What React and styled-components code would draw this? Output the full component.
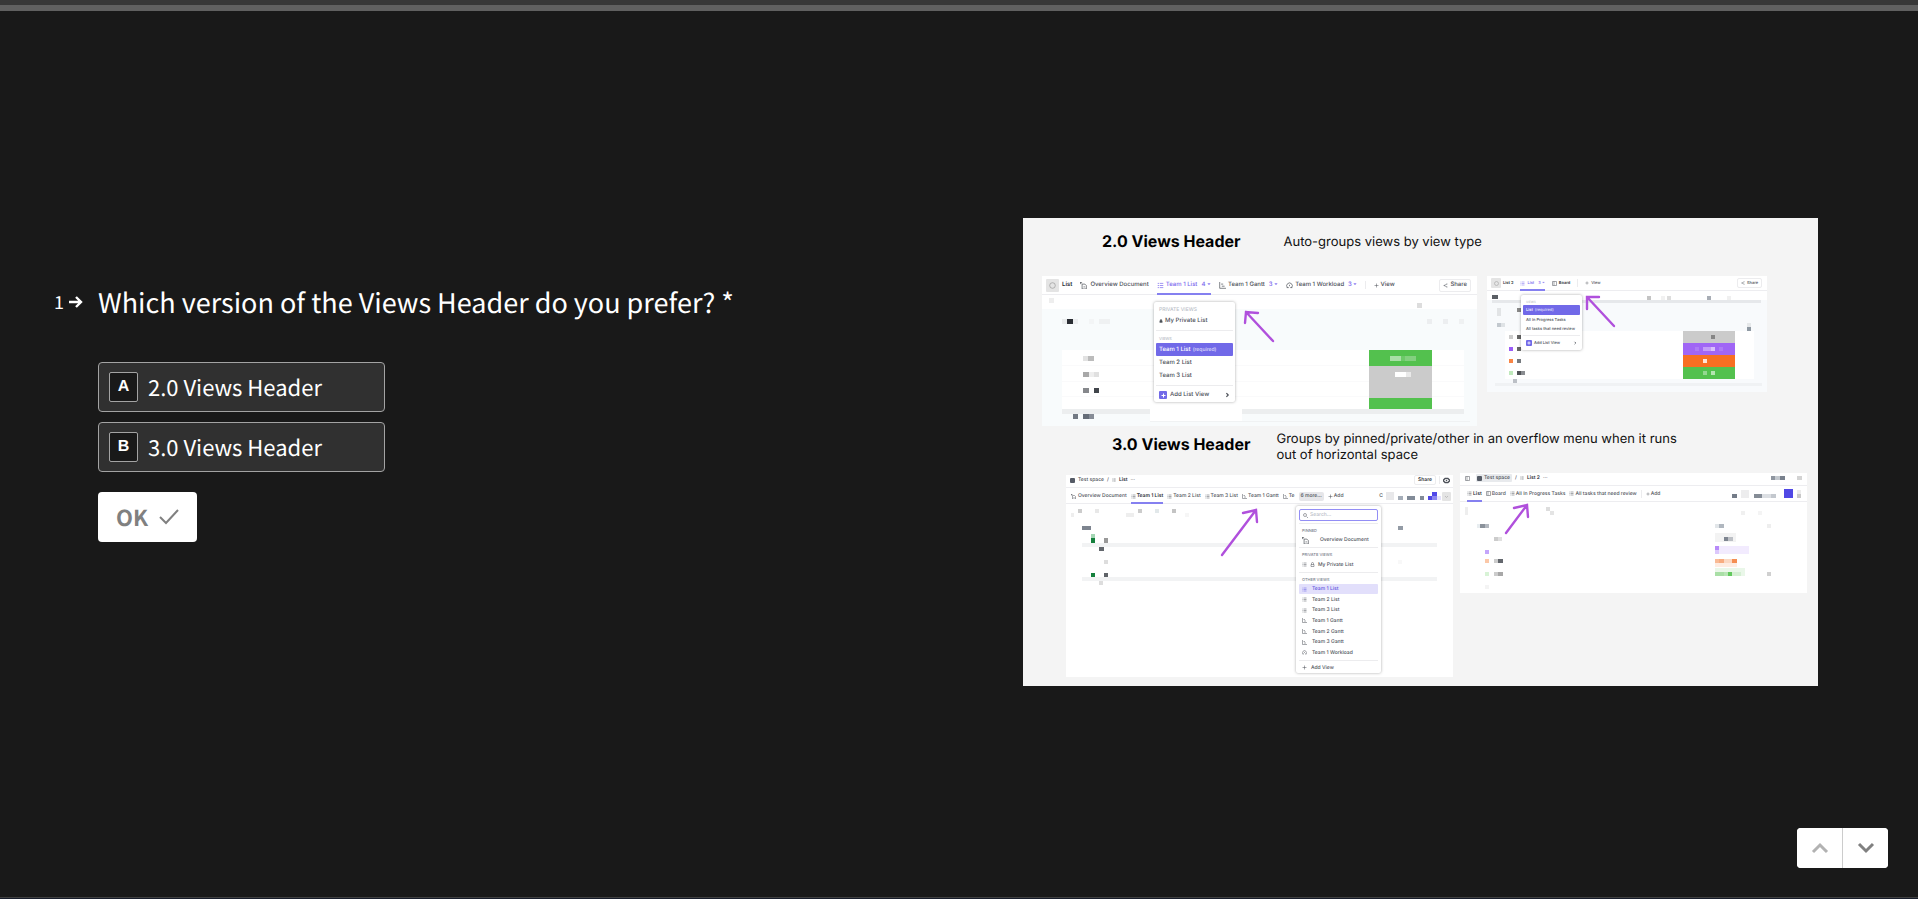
import React, { useState } from 'react';
import styled, { createGlobalStyle, css } from 'styled-components';

const GlobalStyle = createGlobalStyle`
  * {
    box-sizing: border-box;
  }

  body {
    margin: 0;
    background: #191919;
    color: #fff;
    font-family: "Noto Sans CJK SC", "Noto Sans", sans-serif;
    text-rendering: geometricPrecision;
  }

  button, input {
    font: inherit;
    color: inherit;
    text-rendering: inherit;
  }
`;

const Page = styled.div`
  min-height: 100vh;
  display: flex;
  flex-direction: column;
  border-bottom: 1px solid #171d2b;
`;

const TopEdge = styled.div`
  height: 5px;
  background: #373737;
`;

const Progress = styled.div`
  height: 6px;
  background: #606060;
`;

const Main = styled.main`
  flex: 1;
  display: grid;
  grid-template-columns: 1fr 1fr;
  align-items: center;
  padding-bottom: 4px;
  border-bottom: 1px solid #404040;
`;

const Question = styled.form`
  display: grid;
  grid-template-columns: 98px 1fr;
  padding-bottom: 81px;
`;

const Counter = styled.div`
  display: flex;
  align-items: center;
  justify-content: flex-end;
  gap: 5px;
  height: 41px;
  padding-right: 15px;
  font-size: 18px;
`;

const Title = styled.h1`
  margin: 0 0 39px;
  font-size: 27px;
  line-height: 42px;
  font-weight: 400;
`;

const Answers = styled.div`
  grid-column: 2;
  display: flex;
  flex-direction: column;
  align-items: flex-start;
  gap: 10px;
`;

const Option = styled.label`
  display: flex;
  align-items: center;
  gap: 10px;
  min-width: 287px;
  height: 50px;
  padding: 0 10px;
  border: 1px solid #a3a3a3;
  border-radius: 4px;
  background: ${props => (props.$checked ? '#474747' : '#303030')};
  font-size: 22px;
  cursor: pointer;
`;

const Radio = styled.input`
  position: absolute;
  width: 1px;
  height: 1px;
  margin: 0;
  opacity: 0;
`;

const Key = styled.span`
  display: flex;
  align-items: center;
  justify-content: center;
  width: 29px;
  height: 30px;
  border: 1px solid #a3a3a3;
  border-radius: 2px;
  background: #191919;
  font: 700 16px "Liberation Sans", Arial, sans-serif;
`;

const OkButton = styled.button`
  display: flex;
  align-items: center;
  gap: 11px;
  height: 50px;
  margin-top: 10px;
  padding: 0 18px;
  border: 0;
  border-radius: 4px;
  background: #fff;
  color: #808080;
  font-size: 22px;
  font-weight: 700;
  cursor: pointer;
`;

const Nav = styled.nav`
  position: fixed;
  right: 30px;
  bottom: 31px;
  display: flex;
  border-radius: 4px;
  overflow: hidden;
  background: #fff;
`;

const NavButton = styled.button`
  display: flex;
  align-items: center;
  justify-content: center;
  width: 45px;
  height: 40px;
  padding: 0;
  border: 0;
  background: #fff;
  color: ${props => (props.disabled ? '#b2b2b2' : '#808080')};

  & + & {
    width: 46px;
    border-left: 1px solid #ccc;
  }
`;

/* collage */

const Attachment = styled.div`
  padding: 0 100px 0 64px;
`;

const Board = styled.figure`
  margin: 0;
  padding-bottom: 9px;
  background: #f4f4f4;
  color: #111;
  font-family: Inter, sans-serif;
`;

const Caption = styled.div`
  display: flex;
  gap: ${props => props.$gap}px;
  height: ${props => props.$height}px;
  padding: ${props => props.$padding};

  h2 {
    margin: 0;
    color: #000;
    font-size: 16px;
    line-height: 26px;
    font-weight: 700;
  }

  p {
    margin: 0;
    max-width: 410px;
    font-size: 13px;
    line-height: ${props => props.$line}px;
  }
`;

const Shots = styled.div`
  display: grid;
  align-items: start;
  grid-template-columns: ${props => props.$columns};
  gap: ${props => props.$gap}px;
  padding: ${props => props.$padding};
`;

const Shot = styled.section`
  position: relative;
  min-height: ${props => props.$height}px;
  margin-top: ${props => props.$top || 0}px;
  background: #fff;
  color: #4d5159;
  font-size: ${props => props.$size}px;
  line-height: 8px;
  font-weight: 500;
  white-space: nowrap;

  svg {
    flex: none;
  }
`;

const Canvas = styled.svg`
  position: absolute;
  top: 0;
  left: 0;
  width: 100%;
`;

const Bar = styled.div`
  position: relative;
  display: flex;
  align-items: center;
  gap: ${props => props.$gap}px;
  height: ${props => props.$height}px;
  padding: ${props => props.$padding};
  border-bottom: 1px solid #ededf0;
`;

const plain = css`
  display: flex;
  align-items: center;
  padding: 0;
  border: 0;
  background: none;
  line-height: inherit;
  font-weight: inherit;
`;

const Tab = styled.button`
  ${plain}
  align-self: stretch;
  gap: ${props => props.$gap || 2}px;
  color: ${props => props.$color || '#4d5159'};
  box-shadow: ${props => (props.$active ? '0 1px 0 #8580f0, inset 0 -1px 0 #8580f0' : 'none')};

  small {
    margin-left: 2px;
    font-size: inherit;
    color: #7b68ee;
  }
`;

const Badge = styled.span`
  display: flex;
  align-items: center;
  justify-content: center;
  width: ${props => props.$size}px;
  height: ${props => props.$size}px;
  border-radius: 1px;
  background: ${props => props.$bg || '#e4e4e4'};
  color: #999;
`;

const Strong = styled.strong`
  color: #2a2e34;
  font-weight: 600;
`;

const Rule = styled.i`
  width: 1px;
  height: 8px;
  background: #ececee;
`;

const Clipped = styled.span`
  margin-left: auto;
  padding-right: 55px;
`;

const ShareButton = styled.button`
  ${plain}
  gap: 2px;
  margin-left: auto;
  height: ${props => props.$height}px;
  padding: 0 3px;
  border: 1px solid #ececee;
  border-radius: 2px;
`;

const More = styled.button`
  ${plain}
  height: 9px;
  padding: 0 2px;
  border-radius: 2px;
  background: #e6e6e9;
`;

const Pill = styled.span`
  display: flex;
  align-items: center;
  gap: 2px;
  height: 8px;
  margin-left: 3px;
  padding: 0 2px 0 1px;
  border-radius: 1px;
  background: #e8eaed;
`;

const Menu = styled.div`
  position: absolute;
  top: ${props => props.$top}px;
  left: ${props => props.$left}px;
  width: ${props => props.$width}px;
  padding: ${props => props.$padding};
  border-radius: 2px;
  background: #fff;
  box-shadow: 0 0 3px rgba(0, 0, 0, .35);

  hr {
    margin: ${props => props.$rule} 0;
    border: 0;
    border-top: 1px solid #ececee;
  }
`;

const Label = styled.div`
  height: ${props => props.$height}px;
  padding-left: 3px;
  color: ${props => props.$color || '#b9bec7'};
  font-size: ${props => props.$size}px;
  line-height: ${props => props.$height}px;
`;

const Item = styled.button`
  ${plain}
  gap: ${props => props.$gap || 2}px;
  width: 100%;
  height: ${props => props.$height}px;
  padding: 0 3px;
  border-radius: 1px;
  background: ${props => props.$bg || 'transparent'};
  color: ${props => props.$color || '#4d5159'};

  small {
    font-size: ${props => props.$note || 5}px;
    opacity: .75;
  }

  > svg:nth-child(3) {
    margin-left: auto;
  }
`;

const Stack = styled.div`
  display: grid;
  height: 74px;
  grid-auto-rows: 1fr;
  align-items: center;
`;

const Search = styled.label`
  display: flex;
  align-items: center;
  gap: 2px;
  height: 12px;
  padding: 0 3px;
  border: 1px solid #938ef5;
  border-radius: 2px;

  input {
    width: 100%;
    min-width: 0;
    padding: 0;
    border: 0;
    background: none;
    outline: none;
  }

  input::placeholder {
    color: #b9bec7;
  }
`;

const ICONS = {
  list: <path d="M1 2h2M1 5h2M1 8h2M4 2h5M4 5h5M4 8h5" />,
  gantt: <path d="M1 0v9h9M3 3h3M4 6h4" />,
  board: <path d="M1 1h8v8H1zM4 1v8" />,
  gauge: <path d="M2 8a4 4 0 1 1 6 0M1 8h3M6 8h3M5 6V4" />,
  doc: <path d="M3 3h4l2 2v5H3zM5 7h2M0 1h3M1 0v3" />,
  plus: <path d="M5 1v8M1 5h8" />,
  lock: <path d="M2 5h6v4H2zM3 5V3a2 2 0 0 1 4 0v2" fill="currentColor" />,
  unlock: <path d="M2 5h6v4H2zM3 5V3a2 2 0 0 1 4 0v2" />,
  share: <path d="M8 2L2 5l6 3M8 1v2M8 7v2M2 4v2" />,
  search: <path d="M7 7l3 3M1 4a3 3 0 1 0 6 0a3 3 0 1 0-6 0" />,
  gear: <path d="M0 5l3-3h4l3 3-3 3H3zM4 5h2" />,
  right: <path d="M4 2l3 3-3 3" />,
  down: <path d="M2 4l3 3 3-3" />,
  caret: <path d="M2 4h6L5 7z" fill="currentColor" />,
  circle: <circle cx="5" cy="5" r="4" />,
};

function Icon({ name, size = 5, color = 'currentColor', weight = 1 }) {
  return (
    <svg width={size} height={size} viewBox="0 0 10 10" fill="none" stroke={color} strokeWidth={weight} aria-hidden="true">
      {ICONS[name]}
    </svg>
  );
}

// every block is [x, y, width, height, fill]
function Mosaic({ width, height, blocks }) {
  return (
    <Canvas viewBox={`0 0 ${width} ${height}`} aria-hidden="true">
      {blocks.map(([x, y, w, h, fill], i) => (
        <rect key={i} x={x} y={y} width={w} height={h} fill={fill} />
      ))}
    </Canvas>
  );
}

function Arrow({ width, height, d }) {
  return (
    <Canvas viewBox={`0 0 ${width} ${height}`} fill="none" stroke="#b050dc" strokeWidth="2.4" strokeLinecap="round" aria-hidden="true">
      <path d={d} />
    </Canvas>
  );
}

const GROUPED = [
  [0, 33, 435, 117, '#f8fbfc'], [7, 22, 5, 5, '#eee'], [375, 27, 5, 5, '#ddd'],
  [20, 43, 5, 5, '#e9ebec'], [25, 43, 6, 5, '#2a2d33'], [31, 43, 5, 5, '#eceef0'], [47, 43, 5, 5, '#f3f5f6'], [57, 43, 11, 5, '#eff1f2'],
  [385, 43, 5, 5, '#eceef0'], [401, 43, 5, 5, '#eceef0'], [417, 43, 5, 5, '#eff1f2'],
  [20, 74, 402, 59, '#fff'], [20, 89, 402, 1, '#fafafb'], [20, 105, 402, 1, '#fafafb'], [20, 120, 402, 1, '#fafafb'],
  [20, 133, 402, 5, '#eceeef'], [108, 127, 92, 18, '#fff'], [108, 145, 320, 1, '#f0f2f3'],
  [327, 74, 63, 16, '#53c14e'], [327, 90, 63, 32, '#cbcbcb'], [327, 122, 63, 11, '#53c14e'],
  [348, 80, 11, 5, '#a9dfa6'], [359, 80, 4, 5, '#6cca68'], [363, 80, 11, 5, '#83d07f'],
  [353, 96, 11, 5, '#fff'], [364, 96, 5, 5, '#e9e9e9'],
  [41, 80, 5, 5, '#e2e2e2'], [46, 80, 6, 5, '#bcbcbc'],
  [41, 96, 6, 5, '#a8a8a8'], [47, 96, 5, 5, '#eee'], [52, 96, 5, 5, '#e0e0e0'],
  [41, 112, 6, 5, '#86888c'], [52, 112, 5, 5, '#41454b'],
  [31, 138, 5, 5, '#727983'], [41, 138, 6, 5, '#666d78'], [47, 138, 5, 5, '#868c96'],
];

const GROUPED_SMALL = [
  [0, 24, 280, 92, '#f8fafc'], [5, 24, 269, 3, '#e6e8eb'], [5, 19, 6, 4, '#5b5f65'],
  [160, 20, 4, 4, '#c4c4c4'], [174, 20, 4, 4, '#f1f1f1'], [180, 20, 4, 4, '#ddd'], [220, 20, 4, 4, '#a8adb5'], [240, 20, 4, 4, '#f0f0f0'],
  [10, 32, 4, 8, '#e2e4e6'], [30, 32, 4, 4, '#888'], [10, 47, 4, 4, '#c3c9cf'], [14, 47, 4, 4, '#dfe3e6'],
  [260, 47, 4, 4, '#e6e8ea'], [260, 51, 4, 4, '#8f99a3'], [18, 55, 249, 48, '#fff'],
  [196, 55, 52, 12, '#cbcbcb'], [196, 67, 52, 12, '#a066f5'], [196, 79, 52, 12, '#f76f22'], [196, 91, 52, 12, '#53c14e'],
  [22, 59, 4, 4, '#ccc'], [22, 71, 4, 4, '#9a5cf7'], [22, 83, 4, 4, '#f98545'], [22, 95, 4, 4, '#bfe9bc'],
  [30, 59, 4, 4, '#666'], [30, 71, 4, 4, '#666'], [30, 83, 4, 4, '#777b80'], [30, 95, 4, 4, '#505357'], [34, 95, 4, 4, '#8a8d91'],
  [26, 103, 4, 4, '#bcc0c6'], [8, 107, 267, 3, '#f0f2f4'],
  [224, 59, 4, 4, '#858585'], [208, 71, 4, 4, '#ad7bf6'], [216, 71, 8, 4, '#c49df9'], [224, 71, 4, 4, '#d8c0fb'], [232, 71, 4, 4, '#ad7bf6'],
  [216, 83, 4, 4, '#ffe5d6'], [216, 95, 4, 4, '#93d890'], [224, 95, 4, 4, '#b5e5b2'],
];

const PINNED = [
  [320, 17, 8, 8, '#e8e8ea'], [332, 21, 5, 4, '#a5adb8'], [341, 21, 8, 4, '#828b98'], [354, 21, 4, 4, '#828b98'],
  [362, 21, 4, 4, '#4f46e5'], [366, 17, 5, 4, '#5048e8'], [366, 21, 5, 4, '#8b85f0'], [371, 21, 4, 4, '#e4e2fb'],
  [12, 34, 4, 4, '#ccc'], [29, 34, 4, 4, '#e8e8e8'], [72, 34, 4, 4, '#ccc'], [89, 34, 4, 4, '#e2e8ea'], [106, 34, 4, 4, '#c4c4c4'],
  [5, 38, 3, 4, '#eee'], [60, 38, 8, 4, '#eee'], [119, 38, 4, 4, '#f6f6f6'], [16, 51, 9, 4, '#7d848f'],
  [16, 68, 355, 4, '#f2f3f4'], [16, 102, 355, 4, '#f2f3f4'],
  [25, 59, 4, 4, '#a4d6b4'], [25, 63, 4, 5, '#15803d'], [38, 63, 4, 5, '#999'], [33, 72, 5, 4, '#63676d'], [38, 85, 4, 4, '#ddd'],
  [25, 98, 4, 4, '#15803d'], [38, 98, 4, 4, '#5f6368'], [33, 106, 4, 4, '#ddd'], [332, 51, 5, 4, '#939ba5'], [332, 85, 4, 4, '#f8f8f8'],
];

const PINNED_SMALL = [
  [311, 3, 4, 4, '#8e959f'], [315, 3, 5, 4, '#c3c8ce'], [320, 3, 5, 4, '#79818d'], [337, 3, 5, 4, '#d3d3d3'],
  [272, 21, 5, 4, '#747c88'], [281, 17, 8, 8, '#ededee'], [294, 21, 8, 4, '#858c96'], [302, 21, 9, 4, '#dcdfe3'], [311, 21, 5, 4, '#c3c8ce'],
  [324, 16, 9, 9, '#5048e5'], [337, 17, 4, 4, '#ececec'], [337, 21, 4, 4, '#c8c8c8'],
  [5, 34, 3, 8, '#eee'], [86, 34, 4, 4, '#ddd'], [90, 38, 4, 4, '#e4e4e4'], [281, 38, 4, 4, '#f0f0f0'], [298, 38, 4, 4, '#f4f4f4'],
  [17, 51, 3, 4, '#e8edf0'], [20, 51, 5, 4, '#8b929b'], [25, 51, 4, 4, '#b4b9c0'], [34, 64, 4, 4, '#ccc'], [38, 64, 4, 4, '#e0e0e0'],
  [25, 77, 4, 4, '#c4a5fb'], [25, 86, 4, 4, '#fbc8a8'], [34, 86, 4, 4, '#ccc'], [38, 86, 5, 4, '#63676d'],
  [25, 99, 4, 4, '#d8f3d6'], [34, 99, 4, 4, '#ccc'], [38, 99, 5, 4, '#a8a8a8'], [25, 112, 4, 4, '#f4f4f4'],
  [255, 51, 4, 4, '#e2e6e9'], [259, 51, 5, 4, '#b0b7bf'], [307, 51, 4, 4, '#eee'],
  [255, 60, 21, 9, '#f3f3f3'], [264, 64, 4, 4, '#7e8590'], [268, 64, 5, 4, '#bcbfc5'],
  [255, 73, 34, 8, '#f2ebfe'], [255, 73, 4, 4, '#b78af9'], [255, 77, 4, 4, '#dcc8fc'],
  [255, 86, 22, 8, '#feece1'], [255, 86, 4, 4, '#f9bb96'], [259, 86, 5, 4, '#f8ac80'], [264, 86, 8, 4, '#fbd9c4'], [272, 86, 5, 4, '#f58e52'],
  [255, 95, 30, 8, '#eaf7e9'], [255, 99, 9, 4, '#a9dfa6'], [264, 99, 4, 4, '#b9e5b6'], [268, 99, 4, 4, '#62c85d'], [272, 99, 9, 4, '#d5efd3'],
  [307, 99, 4, 4, '#d0d0d0'],
];

function GroupedShot() {
  return (
    <Shot $height={150} $size={6}>
      <Mosaic width={435} height={150} blocks={GROUPED} />
      <Bar $gap={8} $height={19} $padding="0 6px 0 4px">
        <Tab $gap={3}><Badge $size={13}><Icon name="circle" size={7} /></Badge><Strong>List</Strong></Tab>
        <Tab $gap={3}><Icon name="doc" size={7} />Overview Document</Tab>
        <Tab $active $color="#7b68ee"><Icon name="list" size={7} />Team 1 List<small>4 <Icon name="caret" size={4} /></small></Tab>
        <Tab><Icon name="gantt" size={7} />Team 1 Gantt<small>3 <Icon name="caret" size={4} /></small></Tab>
        <Tab><Icon name="gauge" size={7} />Team 1 Workload<small>3 <Icon name="caret" size={4} /></small></Tab>
        <Rule />
        <Tab $gap={1}><Icon name="plus" />View</Tab>
        <ShareButton $height={13}><Icon name="share" />Share</ShareButton>
      </Bar>
      <Menu $top={26} $left={112} $width={81} $padding="4px 2px 1px" $rule="3px">
        <Label $height={8} $size={5}>PRIVATE VIEWS</Label>
        <Item $height={13}><Icon name="lock" size={4} />My Private List</Item>
        <hr />
        <Label $height={9} $size={4}>VIEWS</Label>
        <Item $height={13} $bg="#7169e8" $color="#fff">Team 1 List <small>(required)</small></Item>
        <Item $height={13}>Team 2 List</Item>
        <Item $height={13}>Team 3 List</Item>
        <hr />
        <Item $height={12} $gap={3}>
          <Badge $size={8} $bg="#7169e8"><Icon name="plus" color="#fff" weight={2} /></Badge>
          <span>Add List View</span>
          <Icon name="right" size={6} weight={2} />
        </Item>
      </Menu>
      <Arrow width={435} height={150} d="M231 65L204 36M216 37L204 36L203 47" />
    </Shot>
  );
}

function GroupedSmallShot() {
  return (
    <Shot $height={116} $size={4}>
      <Mosaic width={280} height={116} blocks={GROUPED_SMALL} />
      <Bar $gap={7} $height={15} $padding="0 5px 0 4px">
        <Tab><Badge $size={10}><Icon name="circle" /></Badge><Strong>List 2</Strong></Tab>
        <Tab $active $color="#7b68ee"><Icon name="list" />List<small>3 <Icon name="caret" size={3} /></small></Tab>
        <Tab><Icon name="board" /><Strong>Board</Strong></Tab>
        <Rule />
        <Tab><Icon name="plus" size={4} />View</Tab>
        <ShareButton $height={10}><Icon name="share" size={4} />Share</ShareButton>
      </Bar>
      <Menu $top={19} $left={34} $width={61} $padding="4px 2px 1px" $rule="1px">
        <Label $height={6} $size={3}>VIEWS</Label>
        <Item $height={10} $note={4} $bg="#7169e8" $color="#fff">List <small>(required)</small></Item>
        <Item $height={9}>All In Progress Tasks</Item>
        <Item $height={10}>All tasks that need review</Item>
        <hr />
        <Item $height={12}>
          <Badge $size={6} $bg="#7169e8"><Icon name="plus" size={4} color="#fff" weight={2} /></Badge>
          <span>Add List View</span>
          <Icon name="right" size={4} weight={2} />
        </Item>
      </Menu>
      <Arrow width={280} height={116} d="M127 50L100 21M112 21L100 21L100 33" />
    </Shot>
  );
}

const OTHER_VIEWS = [
  ['list', 'Team 2 List'],
  ['list', 'Team 3 List'],
  ['gantt', 'Team 1 Gantt'],
  ['gantt', 'Team 2 Gantt'],
  ['gantt', 'Team 3 Gantt'],
  ['gauge', 'Team 1 Workload'],
];

function PinnedShot() {
  return (
    <Shot $height={202} $size={5} $top={2}>
      <Mosaic width={387} height={202} blocks={PINNED} />
      <Bar $gap={3} $height={13} $padding="0 3px 2px 4px">
        <Badge $size={5} $bg="#555b66" />
        <span>Test space</span>
        <span>/</span>
        <Icon name="list" size={4} />
        <Strong>List</Strong>
        <span>···</span>
        <ShareButton $height={10}><Strong>Share</Strong></ShareButton>
        <Rule />
        <Icon name="gear" size={7} weight={2} />
      </Bar>
      <Bar $gap={4} $height={16} $padding="1px 2px 0 5px">
        <Tab><Icon name="doc" />Overview Document</Tab>
        <Tab $active $gap={1}><Icon name="list" /><Strong>Team 1 List</Strong></Tab>
        <Tab $gap={1}><Icon name="list" />Team 2 List</Tab>
        <Tab $gap={1}><Icon name="list" />Team 3 List</Tab>
        <Tab $gap={1}><Icon name="gantt" />Team 1 Gantt</Tab>
        <Tab $gap={1}><Icon name="gantt" />Te</Tab>
        <More>6 more...</More>
        <Tab $gap={1}><Icon name="plus" />Add</Tab>
        <Clipped>C</Clipped>
        <Badge $size={9}><Icon name="down" /></Badge>
      </Bar>
      <Menu $top={31} $left={230} $width={85} $padding="3px 3px 1px" $rule="2px">
        <Search><Icon name="search" /><input type="search" placeholder="Search..." aria-label="Search views" /></Search>
        <hr />
        <Label $height={9} $size={4} $color="#7d838e">PINNED</Label>
        <Item $height={10} $gap={11}><Icon name="doc" size={7} />Overview Document</Item>
        <hr />
        <Label $height={9} $size={4} $color="#7d838e">PRIVATE VIEWS</Label>
        <Item $height={11} $gap={3}><Icon name="list" /><Icon name="unlock" /><span>My Private List</span></Item>
        <hr />
        <Label $height={9} $size={4} $color="#7d838e">OTHER VIEWS</Label>
        <Stack>
          <Item $height={10} $gap={5} $bg="#e2dffb" $color="#5f55e0"><Icon name="list" />Team 1 List</Item>
          {OTHER_VIEWS.map(([icon, name]) => (
            <Item key={name} $height={10} $gap={5}><Icon name={icon} />{name}</Item>
          ))}
        </Stack>
        <hr />
        <Item $height={9} $gap={4}><Icon name="plus" />Add View</Item>
      </Menu>
      <Arrow width={387} height={202} d="M156 80L190 35M177 38L190 35L191 47" />
    </Shot>
  );
}

function PinnedSmallShot() {
  return (
    <Shot $height={120} $size={5}>
      <Mosaic width={347} height={120} blocks={PINNED_SMALL} />
      <Bar $gap={3} $height={13} $padding="0 4px 2px 5px">
        <Icon name="board" />
        <Pill><Badge $size={5} $bg="#555b66" />Test space</Pill>
        <span>/</span>
        <Icon name="list" size={4} />
        <Strong>List 2</Strong>
        <span>···</span>
      </Bar>
      <Bar $gap={4} $height={16} $padding="0 4px 0 7px">
        <Tab $active $gap={1}><Icon name="list" /><Strong>List</Strong></Tab>
        <Tab $gap={1}><Icon name="board" />Board</Tab>
        <Tab $gap={1}><Icon name="list" />All In Progress Tasks</Tab>
        <Tab $gap={1}><Icon name="list" />All tasks that need review</Tab>
        <Rule />
        <Tab $gap={1}><Icon name="plus" size={4} />Add</Tab>
      </Bar>
      <Arrow width={347} height={120} d="M46 60L67 32M54 35L67 32L68 44" />
    </Shot>
  );
}

const OPTIONS = [['A', '2.0 Views Header'], ['B', '3.0 Views Header']];

function App() {
  const [answer, setAnswer] = useState('');

  return (
    <Page>
      <GlobalStyle />
      <TopEdge />
      <Progress />
      <Main>
        <Question onSubmit={e => e.preventDefault()}>
          <Counter>
            1
            <svg width="14" height="12" viewBox="0 0 14 12" fill="none" stroke="#fff" strokeWidth="2.4" aria-hidden="true">
              <path d="M0 6h12M7 1l5 5-5 5" />
            </svg>
          </Counter>
          <Title>Which version of the Views Header do you prefer? *</Title>
          <Answers>
            {OPTIONS.map(([key, text]) => (
              <Option key={key} $checked={answer === key}>
                <Radio type="radio" name="version" value={key} checked={answer === key} onChange={() => setAnswer(key)} />
                <Key>{key}</Key>
                {text}
              </Option>
            ))}
            <OkButton type="submit">
              OK
              <svg width="20" height="16" viewBox="0 0 20 16" fill="none" stroke="currentColor" strokeWidth="2" aria-hidden="true">
                <path d="M1 8l6 6L19 1" />
              </svg>
            </OkButton>
          </Answers>
        </Question>
        <Attachment>
          <Board>
            <Caption $gap={43} $height={58} $padding="10px 0 0 79px" $line={28}>
              <h2>2.0 Views Header</h2>
              <p>Auto-groups views by view type</p>
            </Caption>
            <Shots $columns="435fr 280fr" $gap={10} $padding="0 51px 0 19px">
              <GroupedShot />
              <GroupedSmallShot />
            </Shots>
            <Caption $gap={26} $height={47} $padding="5px 0 0 89px" $line={16}>
              <h2>3.0 Views Header</h2>
              <p>Groups by pinned/private/other in an overflow menu when it runs out of horizontal space</p>
            </Caption>
            <Shots $columns="387fr 347fr" $gap={7} $padding="0 11px 0 43px">
              <PinnedShot />
              <PinnedSmallShot />
            </Shots>
          </Board>
        </Attachment>
      </Main>
      <Nav>
        <NavButton type="button" disabled aria-label="Previous question">
          <svg width="18" height="12" viewBox="0 0 18 12" fill="none" stroke="currentColor" strokeWidth="3" aria-hidden="true">
            <path d="M2 10l7-7 7 7" />
          </svg>
        </NavButton>
        <NavButton type="button" aria-label="Next question">
          <svg width="18" height="12" viewBox="0 0 18 12" fill="none" stroke="currentColor" strokeWidth="3" aria-hidden="true">
            <path d="M2 2l7 7 7-7" />
          </svg>
        </NavButton>
      </Nav>
    </Page>
  );
}

export default App;
